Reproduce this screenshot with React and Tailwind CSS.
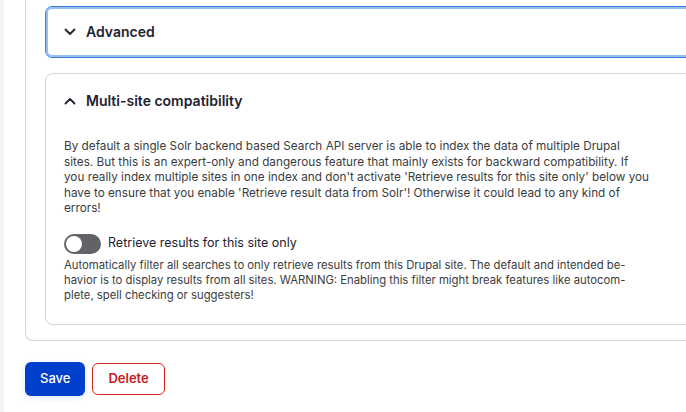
import { useState } from 'react';

const Chevron = ({ up }) => (
  <svg width="12" height="8" viewBox="0 0 12 8" fill="none" className="shrink-0">
    <path
      d={up ? 'M1.5 6.5 6 2l4.5 4.5' : 'M1.5 1.5 6 6l4.5-4.5'}
      stroke="#222330"
      strokeWidth="1.8"
      strokeLinecap="round"
      strokeLinejoin="round"
    />
  </svg>
);

const Toggle = ({ on, onChange }) => (
  <button
    onClick={() => onChange(!on)}
    className={`relative w-[37px] h-[20px] rounded-full shrink-0 ${on ? 'bg-[#003ecc]' : 'bg-[#626366]'}`}
  >
    <span
      className={`absolute top-[2px] w-[16px] h-[16px] rounded-full bg-white ${on ? 'left-[19px]' : 'left-[2px]'}`}
    />
  </button>
);

export default function App() {
  const [siteOnly, setSiteOnly] = useState(false);

  return (
    <div className="w-[686px] h-[412px] overflow-hidden bg-white flex font-['Inter',sans-serif] text-[#222330]">
      {/* left page gutter */}
      <div className="w-[4px] bg-[#f3f4f9] shrink-0" />

      <div className="flex flex-col pl-[21px] shrink-0">
        {/* outer card */}
        <div className="w-[720px] border-l border-b border-[#d3d4d9] rounded-bl-lg pl-[19px] pt-[6px] pb-[15px]">
          {/* Advanced (collapsed, focused) */}
          <div className="h-[52px] rounded-[7px] border border-[#3b7fde] shadow-[inset_0_0_0_2px_#93c0f5] flex items-center gap-[10px] pl-[18px] pb-[1px]">
            <Chevron />
            <span className="text-[14px] font-semibold">Advanced</span>
          </div>

          {/* Multi-site compatibility (open) */}
          <div className="mt-[15px] h-[252px] rounded-lg border border-[#d3d4d9]">
            <div className="h-[53px] flex items-center gap-[10px] pl-[18px]">
              <Chevron up />
              <span className="text-[14px] font-semibold">Multi-site compatibility</span>
            </div>
            <div className="pl-[18px] pt-[12px]">
              <p className="text-[11.75px] leading-[15.5px] text-[#3b3c40] whitespace-nowrap">
                By default a single Solr backend based Search API server is able to index the data of multiple Drupal<br />
                sites. But this is an expert-only and dangerous feature that mainly exists for backward compatibility. If<br />
                you really index multiple sites in one index and don't activate 'Retrieve results for this site only' below you<br />
                have to ensure that you enable 'Retrieve result data from Solr'! Otherwise it could lead to any kind of<br />
                errors!
              </p>
              <div className="mt-[17px] flex items-center gap-[7px] h-[20px]">
                <Toggle on={siteOnly} onChange={setSiteOnly} />
                <span className="text-[12.5px] text-[#222330]">Retrieve results for this site only</span>
              </div>
              <p className="mt-[4px] text-[11.3px] leading-[15px] text-[#3b3c40] whitespace-nowrap">
                Automatically filter all searches to only retrieve results from this Drupal site. The default and intended be-<br />
                havior is to display results from all sites. WARNING: Enabling this filter might break features like autocom-<br />
                plete, spell checking or suggesters!
              </p>
            </div>
          </div>
        </div>

        {/* actions */}
        <div className="mt-[21px] flex items-center gap-[7px]">
          <button className="h-[34px] px-[15px] rounded-[6px] bg-[#003ecc] text-white text-[13px] font-medium shadow-[0_2px_6px_rgba(0,62,204,0.12)]">
            Save
          </button>
          <button className="h-[32px] px-[15px] rounded-[6px] border border-[#d72222] text-[#c62020] text-[13px] font-semibold bg-white">
            Delete
          </button>
        </div>
      </div>
    </div>
  );
}
